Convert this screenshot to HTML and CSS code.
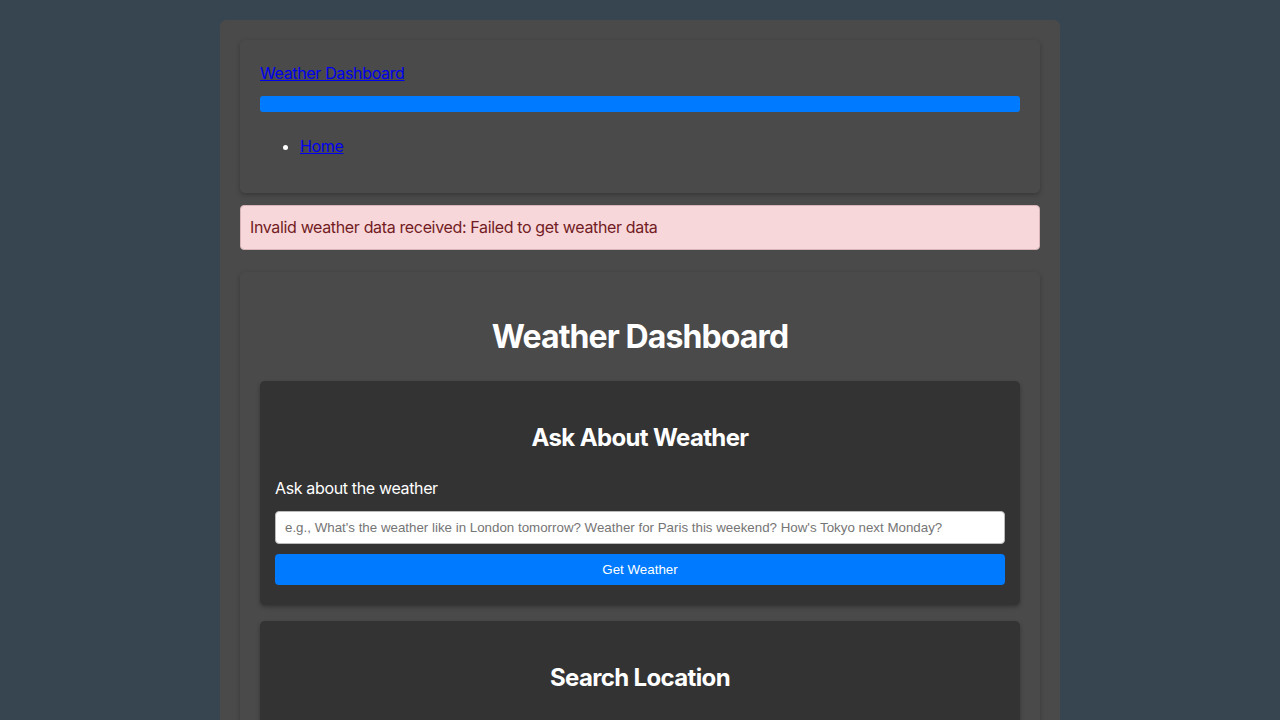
FILE: index.html
```html
<!DOCTYPE html>
<html lang="en">
<head>
<meta charset="utf-8">
<title>Weather Dashboard</title>
<link rel="stylesheet" href="styles.css">
</head>
<body>
<div class="container">
  <nav class="navcard">
    <a class="brand" href="#">Weather Dashboard</a>
    <div class="navbar-bar"></div>
    <ul class="navlist">
      <li><a href="#">Home</a></li>
    </ul>
  </nav>
  <div class="alert">Invalid weather data received: Failed to get weather data</div>
  <main class="maincard">
    <h1 class="title">Weather Dashboard</h1>
    <section class="panel">
      <h2 class="panel-title">Ask About Weather</h2>
      <label class="label" for="q">Ask about the weather</label>
      <input class="field" id="q" type="text" placeholder="e.g., What's the weather like in London tomorrow? Weather for Paris this weekend? How's Tokyo next Monday?">
      <button class="btn">Get Weather</button>
    </section>
    <section class="panel">
      <h2 class="panel-title">Search Location</h2>
      <label class="label" for="loc">Location</label>
      <input class="field" id="loc" type="text" placeholder="Enter a city name">
      <button class="btn">Search</button>
    </section>
  </main>
</div>
</body>
</html>
```
FILE: styles.css
```css
html, body {
  margin: 0;
  padding: 0;
}
body {
  background: #36454f;
  font-family: Inter, "Noto Sans", "Liberation Sans", sans-serif;
  color: #ffffff;
  font-size: 16px;
  line-height: 1.5;
  letter-spacing: -0.022em;
}
.container {
  width: 800px;
  margin: 20px auto;
  padding: 20px;
  background: #4a4a4a;
  border-radius: 6px;
}
.navcard {
  background: #4a4a4a;
  border-radius: 5px;
  box-shadow: 0 2px 5px rgba(0, 0, 0, 0.25);
  padding: 21px 20px 19px;
}
.brand {
  display: block;
  color: #0000ee;
  text-decoration: underline;
  font-size: 16px;
  line-height: 24px;
}
.navbar-bar {
  height: 16px;
  margin-top: 11px;
  background: #007bff;
  border-radius: 3px;
}
.navlist {
  margin: 22px 0 16px;
  padding-left: 40px;
}
.navlist li {
  color: #ffffff;
}
.navlist a {
  color: #0000ee;
}
.alert {
  margin-top: 12px;
  background: #f8d7da;
  color: #721c24;
  border: 1px solid #d5b3b7;
  border-radius: 4px;
  padding: 10px 9px;
  line-height: 23px;
}
.maincard {
  margin-top: 22px;
  background: #4a4a4a;
  border-radius: 5px;
  box-shadow: 0 2px 5px rgba(0, 0, 0, 0.25);
  padding: 20px;
  display: flex;
  flex-direction: column;
  gap: 16px;
}
.title {
  margin: 26px 0 9px;
  text-align: center;
  font-size: 32px;
  line-height: 38px;
  font-weight: 700;
  letter-spacing: -0.028em;
}
.panel {
  background: #333333;
  border-radius: 5px;
  box-shadow: 0 2px 4px rgba(0, 0, 0, 0.3);
  padding: 20px 15px;
  display: flex;
  flex-direction: column;
}
.panel-title {
  margin: 22px 0 24px;
  text-align: center;
  font-size: 24px;
  line-height: 29px;
  font-weight: 700;
  letter-spacing: -0.027em;
}
.label {
  display: block;
  font-size: 16px;
  line-height: 24px;
}
.field {
  margin-top: 11px;
  height: 33px;
  box-sizing: border-box;
  padding: 6px 9px;
  border: 1px solid #bbbbbb;
  border-radius: 4px;
  background: #ffffff;
  font-family: "Liberation Sans", Arial, sans-serif;
  font-size: 13.333px;
  letter-spacing: 0;
  color: #333;
}
.field::placeholder {
  color: #757575;
}
.btn {
  margin-top: 10px;
  height: 31px;
  border: none;
  border-radius: 4px;
  background: #007bff;
  color: #ffffff;
  font-family: "Liberation Sans", Arial, sans-serif;
  font-size: 13.333px;
  letter-spacing: 0;
}
```
